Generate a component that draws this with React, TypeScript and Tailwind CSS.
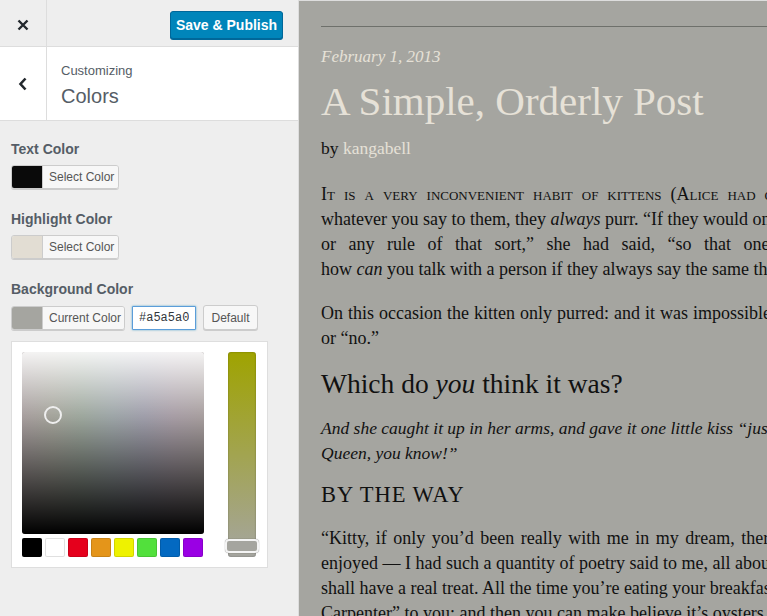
import React from "react";

const sans = "font-['Liberation_Sans',Arial,sans-serif]";
const serif = "font-['Liberation_Serif','Times_New_Roman',serif]";

const swatches = ["#000000", "#ffffff", "#e5001c", "#e4951a", "#eef200", "#52e03c", "#0369c1", "#9a00e4"];

const ColorButton = ({ color, label, width }: { color: string; label: string; width: string }) => (
  <div className={`flex h-[24px] ${width} overflow-hidden rounded-[3px] border border-[#ccc] shadow-[0_1px_0_#ccc]`}>
    <span className="w-[30px] shrink-0" style={{ backgroundColor: color }} />
    <span className="flex flex-1 items-center border-l border-[#ccc] bg-[#f7f7f7] pl-[6px] text-[12px] text-[#555]">
      {label}
    </span>
  </div>
);

const Picker = () => (
  <div className="mt-[11px] flex h-[227px] w-[257px] gap-[24px] border border-[#dedede] bg-white p-[10px]">
    <div className="flex flex-col">
      <div className="relative h-[182px] w-[182px] overflow-hidden rounded-[3px] shadow-[inset_0_0_2px_rgba(0,0,0,0.5)]">
        <svg width="182" height="182" className="block">
          <defs>
            <linearGradient id="hue" x1="0" x2="1" y1="0" y2="0">
              <stop offset="0" stopColor="#a89f9f" />
              <stop offset="0.17" stopColor="#a5a59c" />
              <stop offset="0.33" stopColor="#9ea89e" />
              <stop offset="0.5" stopColor="#9ea6a8" />
              <stop offset="0.67" stopColor="#a09fab" />
              <stop offset="0.83" stopColor="#a89ea6" />
              <stop offset="1" stopColor="#a89f9f" />
            </linearGradient>
            <linearGradient id="lum" x1="0" x2="0" y1="0" y2="1">
              <stop offset="0" stopColor="#ffffff" stopOpacity="0.88" />
              <stop offset="0.35" stopColor="#ffffff" stopOpacity="0" />
              <stop offset="0.35" stopColor="#000000" stopOpacity="0" />
              <stop offset="1" stopColor="#000000" stopOpacity="1" />
            </linearGradient>
          </defs>
          <rect width="182" height="182" fill="url(#hue)" />
          <rect width="182" height="182" fill="url(#lum)" />
          <circle cx="31" cy="63" r="8" fill="none" stroke="#eeeeee" strokeWidth="2" />
        </svg>
      </div>
      <div className="mt-[4px] flex gap-[3px]">
        {swatches.map((c) => (
          <span
            key={c}
            className="h-[19px] w-[20px] rounded-[2px] shadow-[inset_0_0_0_1px_rgba(0,0,0,0.12)]"
            style={{ backgroundColor: c }}
          />
        ))}
      </div>
    </div>
    <div className="relative h-[205px] w-[28px]">
      <div className="h-full w-full rounded-[3px] bg-[linear-gradient(to_bottom,#9fa300,#a5a5a0)] shadow-[inset_0_0_2px_rgba(0,0,0,0.35)]" />
      <div className="absolute left-[-3px] top-[187px] h-[14px] w-[34px] rounded-[4px] border-2 border-[#f4f4f4] bg-[#a5a59f] shadow-[0_0_1px_rgba(0,0,0,0.6)]" />
    </div>
  </div>
);

const Sidebar = () => (
  <div className={`flex h-full w-[299px] shrink-0 flex-col border-r border-[#ddd] bg-[#eee] ${sans}`}>
    <div className="flex h-[47px] shrink-0 items-start border-b border-[#ddd]">
      <div className="flex h-full w-[47px] justify-center border-r border-[#ddd] pt-[19px]">
        <svg width="12" height="12" viewBox="0 0 12 12">
          <path d="M1.5 1.5 L10.5 10.5 M10.5 1.5 L1.5 10.5" stroke="#23282d" strokeWidth="2.4" />
        </svg>
      </div>
      <div className="flex flex-1 justify-end pr-[15px] pt-[11px]">
        <button className="h-[28px] w-[113px] rounded-[3px] border border-[#006799] bg-[#0085ba] text-[14px] font-bold text-white shadow-[0_1px_0_#006799]">
          Save &amp; Publish
        </button>
      </div>
    </div>
    <div className="flex h-[74px] shrink-0 border-b border-[#ddd] bg-white">
      <div className="flex w-[47px] items-center justify-center border-r border-[#ddd]">
        <svg width="10" height="14" viewBox="0 0 10 14">
          <path d="M7.5 1.5 L2.5 7 L7.5 12.5" fill="none" stroke="#23282d" strokeWidth="2.6" />
        </svg>
      </div>
      <div className="flex flex-col justify-center pl-[14px] pt-[4px] text-[#555d66]">
        <span className="text-[13px] leading-[16px]">Customizing</span>
        <span className="mt-[4px] text-[20px] font-light leading-[26px]">Colors</span>
      </div>
    </div>
    <div className="flex flex-col px-[11px] pt-[19px]">
      <div className="text-[14px] font-bold leading-[18px] text-[#555d66]">Text Color</div>
      <div className="mt-[7px]">
        <ColorButton color="#0a0a0a" label="Select Color" width="w-[108px]" />
      </div>
      <div className="mt-[21px] text-[14px] font-bold leading-[18px] text-[#555d66]">Highlight Color</div>
      <div className="mt-[7px]">
        <ColorButton color="#e2ddd3" label="Select Color" width="w-[108px]" />
      </div>
      <div className="mt-[21px] text-[14px] font-bold leading-[18px] text-[#555d66]">Background Color</div>
      <div className="mt-[7px] flex items-center gap-[7px]">
        <ColorButton color="#a5a5a0" label="Current Color" width="w-[114px]" />
        <input
          readOnly
          value="#a5a5a0"
          className="h-[24px] w-[64px] rounded-[1px] border border-[#5b9dd9] bg-white px-[6px] font-['Liberation_Mono',monospace] text-[12px] text-[#32373c] shadow-[0_0_2px_rgba(30,140,190,0.8)] outline-none"
        />
        <button className="h-[25px] w-[55px] rounded-[3px] border border-[#ccc] bg-[#f7f7f7] text-[12px] text-[#555] shadow-[0_1px_0_#ccc]">
          Default
        </button>
      </div>
      <Picker />
    </div>
  </div>
);

const Line = ({ children, className = "" }: { children: React.ReactNode; className?: string }) => (
  <div className={`whitespace-nowrap leading-[25px] ${className}`}>{children}</div>
);

const Preview = () => (
  <div className={`flex-1 overflow-hidden border-t border-[#ddd] bg-[#a5a5a0] ${serif} text-[#111]`}>
    <div className="pl-[22px] pt-[25px]">
      <div className="h-px w-[800px] bg-[#6e706b]" />
      <div className="mt-[18px] text-[17px] italic leading-[24px] text-[#e6e1d7]">February 1, 2013</div>
      <h1 className="mt-[7px] whitespace-nowrap text-[41px] leading-[50px] text-[#e6e1d7]">A Simple, Orderly Post</h1>
      <div className="mt-[10px] text-[17.5px] leading-[24px]">
        by <span className="text-[#e6e1d7]">kangabell</span>
      </div>
      <div className="mt-[22px] text-[18px]">
        <Line className="[font-variant-caps:small-caps] [word-spacing:4.5px]">
          It is a very inconvenient habit of kittens (Alice had once made the remark) that,
        </Line>
        <Line>
          whatever you say to them, they <em>always</em> purr. “If they would only purr for ‘yes’ and mew for ‘no,’
        </Line>
        <Line className="[word-spacing:8px]">or any rule of that sort,” she had said, “so that one could keep up a conversation! But</Line>
        <Line>
          how <em>can</em> you talk with a person if they always say the same thing?”
        </Line>
      </div>
      <div className="mt-[19px] text-[18px]">
        <Line className="[word-spacing:0.5px]">On this occasion the kitten only purred: and it was impossible to guess whether it meant “yes”</Line>
        <Line>or “no.”</Line>
      </div>
      <h2 className="mt-[15px] whitespace-nowrap text-[27.5px] leading-[36px]">
        Which do <em>you</em> think it was?
      </h2>
      <div className="mt-[14px] text-[17.5px] italic">
        <Line>And she caught it up in her arms, and gave it one little kiss “just to show it’s only the Red</Line>
        <Line>Queen, you know!”</Line>
      </div>
      <h3 className="mt-[14px] text-[22.5px] uppercase leading-[30px] tracking-[1px]">By the way</h3>
      <div className="mt-[16px] text-[18px]">
        <Line className="[word-spacing:2px]">“Kitty, if only you’d been really with me in my dream, there was one thing you would have</Line>
        <Line>enjoyed — I had such a quantity of poetry said to me, all about fishes! To-morrow morning you</Line>
        <Line>shall have a real treat. All the time you’re eating your breakfast, I’ll repeat ‘The Walrus and the</Line>
        <Line>Carpenter” to you; and then you can make believe it’s oysters, dear!”</Line>
      </div>
    </div>
  </div>
);

export default function App() {
  return (
    <div className="flex h-[616px] w-[767px] overflow-hidden">
      <Sidebar />
      <Preview />
    </div>
  );
}
